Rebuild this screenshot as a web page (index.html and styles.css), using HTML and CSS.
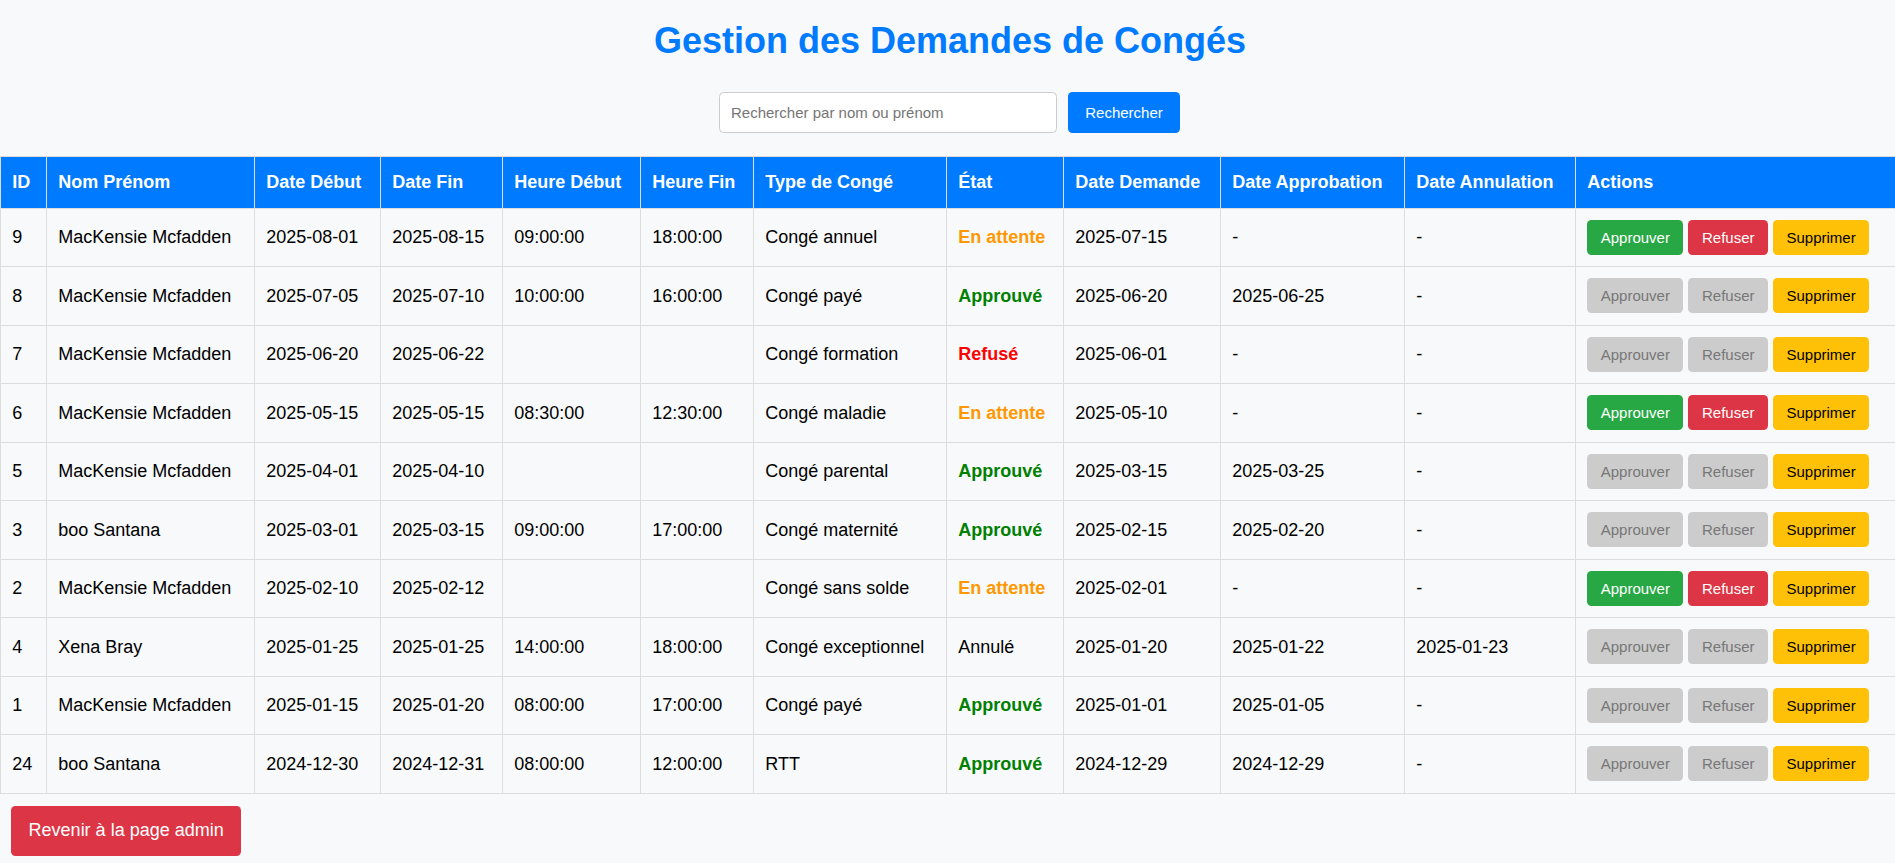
FILE: index.html
```html
<!DOCTYPE html>
<html lang="fr">
<head>
<meta charset="utf-8">
<title>Gestion des Demandes de Congés</title>
<link rel="stylesheet" href="styles.css">
</head>
<body>
<h1 class="title">Gestion des Demandes de Congés</h1>
<form class="search">
  <input class="search-input" type="text" placeholder="Rechercher par nom ou prénom">
  <button class="search-btn" type="button">Rechercher</button>
</form>
<table class="grid">
  <colgroup>
    <col class="c-id"><col class="c-name"><col class="c-d1"><col class="c-d2"><col class="c-h1"><col class="c-h2"><col class="c-type"><col class="c-state"><col class="c-dem"><col class="c-app"><col class="c-ann"><col class="c-act">
  </colgroup>
  <thead>
    <tr><th>ID</th><th>Nom Prénom</th><th>Date Début</th><th>Date Fin</th><th>Heure Début</th><th>Heure Fin</th><th>Type de Congé</th><th>État</th><th>Date Demande</th><th>Date Approbation</th><th>Date Annulation</th><th>Actions</th></tr>
  </thead>
  <tbody>
    <tr><td>9</td><td>MacKensie Mcfadden</td><td>2025-08-01</td><td>2025-08-15</td><td>09:00:00</td><td>18:00:00</td><td>Congé annuel</td><td><span class="st-wait">En attente</span></td><td>2025-07-15</td><td>-</td><td>-</td><td><div class="acts"><button class="b b-ok">Approuver</button><button class="b b-no">Refuser</button><button class="b b-del">Supprimer</button></div></td></tr>
    <tr><td>8</td><td>MacKensie Mcfadden</td><td>2025-07-05</td><td>2025-07-10</td><td>10:00:00</td><td>16:00:00</td><td>Congé payé</td><td><span class="st-ok">Approuvé</span></td><td>2025-06-20</td><td>2025-06-25</td><td>-</td><td><div class="acts"><button class="b b-off">Approuver</button><button class="b b-off">Refuser</button><button class="b b-del">Supprimer</button></div></td></tr>
    <tr><td>7</td><td>MacKensie Mcfadden</td><td>2025-06-20</td><td>2025-06-22</td><td></td><td></td><td>Congé formation</td><td><span class="st-no">Refusé</span></td><td>2025-06-01</td><td>-</td><td>-</td><td><div class="acts"><button class="b b-off">Approuver</button><button class="b b-off">Refuser</button><button class="b b-del">Supprimer</button></div></td></tr>
    <tr><td>6</td><td>MacKensie Mcfadden</td><td>2025-05-15</td><td>2025-05-15</td><td>08:30:00</td><td>12:30:00</td><td>Congé maladie</td><td><span class="st-wait">En attente</span></td><td>2025-05-10</td><td>-</td><td>-</td><td><div class="acts"><button class="b b-ok">Approuver</button><button class="b b-no">Refuser</button><button class="b b-del">Supprimer</button></div></td></tr>
    <tr><td>5</td><td>MacKensie Mcfadden</td><td>2025-04-01</td><td>2025-04-10</td><td></td><td></td><td>Congé parental</td><td><span class="st-ok">Approuvé</span></td><td>2025-03-15</td><td>2025-03-25</td><td>-</td><td><div class="acts"><button class="b b-off">Approuver</button><button class="b b-off">Refuser</button><button class="b b-del">Supprimer</button></div></td></tr>
    <tr><td>3</td><td>boo Santana</td><td>2025-03-01</td><td>2025-03-15</td><td>09:00:00</td><td>17:00:00</td><td>Congé maternité</td><td><span class="st-ok">Approuvé</span></td><td>2025-02-15</td><td>2025-02-20</td><td>-</td><td><div class="acts"><button class="b b-off">Approuver</button><button class="b b-off">Refuser</button><button class="b b-del">Supprimer</button></div></td></tr>
    <tr><td>2</td><td>MacKensie Mcfadden</td><td>2025-02-10</td><td>2025-02-12</td><td></td><td></td><td>Congé sans solde</td><td><span class="st-wait">En attente</span></td><td>2025-02-01</td><td>-</td><td>-</td><td><div class="acts"><button class="b b-ok">Approuver</button><button class="b b-no">Refuser</button><button class="b b-del">Supprimer</button></div></td></tr>
    <tr><td>4</td><td>Xena Bray</td><td>2025-01-25</td><td>2025-01-25</td><td>14:00:00</td><td>18:00:00</td><td>Congé exceptionnel</td><td><span class="st-cancel">Annulé</span></td><td>2025-01-20</td><td>2025-01-22</td><td>2025-01-23</td><td><div class="acts"><button class="b b-off">Approuver</button><button class="b b-off">Refuser</button><button class="b b-del">Supprimer</button></div></td></tr>
    <tr><td>1</td><td>MacKensie Mcfadden</td><td>2025-01-15</td><td>2025-01-20</td><td>08:00:00</td><td>17:00:00</td><td>Congé payé</td><td><span class="st-ok">Approuvé</span></td><td>2025-01-01</td><td>2025-01-05</td><td>-</td><td><div class="acts"><button class="b b-off">Approuver</button><button class="b b-off">Refuser</button><button class="b b-del">Supprimer</button></div></td></tr>
    <tr><td>24</td><td>boo Santana</td><td>2024-12-30</td><td>2024-12-31</td><td>08:00:00</td><td>12:00:00</td><td>RTT</td><td><span class="st-ok">Approuvé</span></td><td>2024-12-29</td><td>2024-12-29</td><td>-</td><td><div class="acts"><button class="b b-off">Approuver</button><button class="b b-off">Refuser</button><button class="b b-del">Supprimer</button></div></td></tr>
  </tbody>
</table>
<div class="footer">
  <button class="back-btn" type="button">Revenir à la page admin</button>
</div>
</body>
</html>
```
FILE: styles.css
```css
html, body {
  margin: 0;
  padding: 0;
}
body {
  background: #f8f9fa;
  font-family: "Liberation Sans", Arial, Helvetica, sans-serif;
  font-size: 18px;
  color: #000;
}
.title {
  margin: 20px 0 31px;
  padding-left: 5px;
  text-align: center;
  font-size: 36px;
  font-weight: bold;
  line-height: 41px;
  color: #007bff;
}
.search {
  display: flex;
  justify-content: center;
  gap: 11px;
  margin: 0 0 23px;
  padding-left: 4px;
}
.search-input {
  box-sizing: border-box;
  width: 338px;
  height: 41px;
  padding: 0 11px;
  border: 1px solid #ccc;
  border-radius: 4.5px;
  background: #fff;
  font-family: "Liberation Sans", Arial, sans-serif;
  font-size: 15px;
  color: #000;
  outline: none;
}
.search-input::placeholder {
  color: #757575;
}
.search-btn {
  box-sizing: border-box;
  width: 112px;
  height: 41px;
  padding: 0;
  border: none;
  border-radius: 4.5px;
  background: #007bff;
  color: #fff;
  font-family: "Liberation Sans", Arial, sans-serif;
  font-size: 15px;
}
.grid {
  width: 100%;
  border-collapse: collapse;
  table-layout: fixed;
}
.c-id { width: 46px; }
.c-name { width: 208px; }
.c-d1 { width: 126px; }
.c-d2 { width: 122px; }
.c-h1 { width: 138px; }
.c-h2 { width: 113px; }
.c-type { width: 193px; }
.c-state { width: 117px; }
.c-dem { width: 157px; }
.c-app { width: 184px; }
.c-ann { width: 171px; }
.c-act { width: 320px; }
.grid th,
.grid td {
  border: 1px solid #ddd;
  text-align: left;
  white-space: nowrap;
  overflow: hidden;
}
.grid th {
  padding: 15px 11.25px;
  line-height: 20.7px;
  background: #007bff;
  color: #fff;
  font-weight: bold;
}
.grid td {
  padding: 11.25px;
  line-height: 20.7px;
  vertical-align: middle;
}
.st-wait { color: #ff9800; font-weight: bold; }
.st-ok { color: #008000; font-weight: bold; }
.st-no { color: #ff0000; font-weight: bold; }
.st-cancel { color: #000; }
.acts {
  display: flex;
  gap: 5px;
  height: 35px;
}
.b {
  box-sizing: border-box;
  height: 35px;
  padding: 0 13.5px;
  border: none;
  border-radius: 4.5px;
  font-family: "Liberation Sans", Arial, sans-serif;
  font-size: 15px;
  line-height: 35px;
}
.b-ok { background: #28a745; color: #fff; }
.b-no { background: #dc3545; color: #fff; }
.b-del { background: #ffc107; color: #000; }
.b-off { background: #ccc; color: #777; }
.footer {
  padding: 12px 0 0 11px;
}
.back-btn {
  box-sizing: border-box;
  height: 50px;
  padding: 0 17.6px;
  border: none;
  border-radius: 4.5px;
  background: #dc3545;
  color: #fff;
  font-family: "Liberation Sans", Arial, sans-serif;
  font-size: 18px;
}
```
